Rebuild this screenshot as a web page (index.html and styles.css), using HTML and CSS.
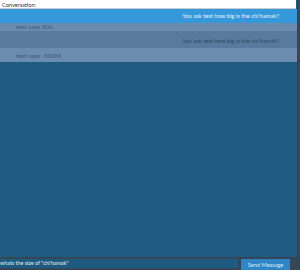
FILE: index.html
```html
<!DOCTYPE html>
<html lang="en">
<head>
    <meta charset="UTF-8">
    <title>Chat</title>
    <link rel="stylesheet" href="styles.css">
</head>
<body>
    <div class="chat">
        <div class="chat-area">
            <div class="title">Conversation:</div>
            <div class="msg msg-out first">You ask test how big is the chi'hamak?</div>
            <div class="msg msg-in second">test says 500.</div>
            <div class="msg msg-out dim third">You ask test how big is the chi'hamak?</div>
            <div class="msg msg-in fourth">test says -500M.</div>
        </div>
        <div class="composer">
            <div class="input">whats the size of "chi'hamak"</div>
            <button class="send">Send Message</button>
        </div>
    </div>
</body>
</html>
```

FILE: styles.css
```css
html, body {
    margin: 0;
    height: 100%;
}
body {
    background: #374656;
    font-family: Lato, "Open Sans", sans-serif;
    font-size: 6.5px;
}
.chat {
    height: 270px;
    display: flex;
    flex-direction: column;
}
.chat-area {
    flex: 1;
    width: 297px;
    background: #1f5a80;
    border-bottom: 2px solid #374656;
}
.title {
    height: 9px;
    line-height: 9px;
    width: 296px;
    background: #fff;
    color: #333;
    font-size: 5.6px;
    padding-left: 2px;
    box-sizing: border-box;
    border-bottom: 1px solid #c9ccd0;
}
.msg {
    line-height: 8px;
    white-space: nowrap;
}
.msg-out {
    text-align: right;
    padding-right: 18px;
    color: #e8f3fb;
    font-size: 5.8px;
}
.msg-in {
    padding-left: 16px;
    color: #3d5874;
    background: #6b8cae;
    font-size: 6.3px;
}
.first {
    background: #3498db;
    line-height: 14px;
}
.second {
    height: 8px;
}
.dim {
    background: #587a9c;
    color: #2f4a66;
}
.third {
    padding-top: 6px;
    padding-bottom: 3px;
}
.fourth {
    padding-top: 4px;
    padding-bottom: 2px;
}
.composer {
    display: flex;
    height: 11px;
}
.input {
    width: 238px;
    height: 9px;
    line-height: 9px;
    background: #1f5a80;
    color: #e3edf4;
    font-size: 5.4px;
    white-space: nowrap;
    overflow: hidden;
}
.send {
    margin-left: 3px;
    width: 49px;
    height: 11px;
    padding: 0;
    border: none;
    background: #2e86c8;
    color: #d6e8f5;
    font-family: Lato, "Open Sans", sans-serif;
    font-size: 5.7px;
}
```
